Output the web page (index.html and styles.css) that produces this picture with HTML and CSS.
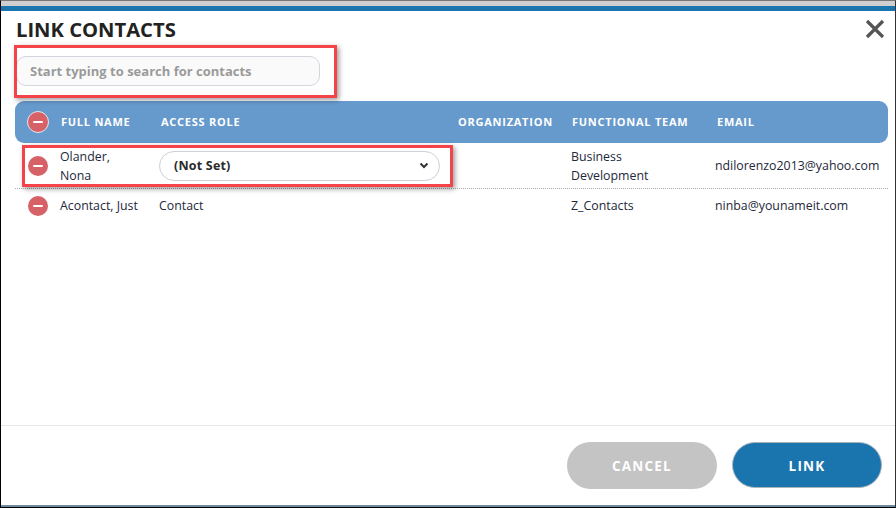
FILE: index.html
```html
<!DOCTYPE html>
<html lang="en">
<head>
<meta charset="utf-8">
<title>Link Contacts</title>
<link rel="stylesheet" href="styles.css">
</head>
<body>
<div class="frame">
  <div class="topgray"></div>
  <div class="topblue"></div>
  <div class="modal">
    <header class="head">
      <h1 class="title">LINK CONTACTS</h1>
      <button class="close" aria-label="Close">
        <svg width="20" height="20" viewBox="0 0 20 20"><path d="M2 2 L18 18 M18 2 L2 18" stroke="#555" stroke-width="3.2" fill="none"/></svg>
      </button>
    </header>
    <div class="search"><input class="search-input" placeholder="Start typing to search for contacts"></div>
    <div class="table">
      <div class="row row-head">
        <span class="cell-icon"><span class="minus minus-ring"></span></span>
        <span class="th">FULL NAME</span>
        <span class="th th-role">ACCESS ROLE</span>
        <span class="th th-org">ORGANIZATION</span>
        <span class="th">FUNCTIONAL TEAM</span>
        <span class="th th-role">EMAIL</span>
      </div>
      <div class="row row-body row-first">
        <span class="cell-icon"><span class="minus"></span></span>
        <span class="td">Olander,<br>Nona</span>
        <span class="td"><span class="select">(Not Set)
          <svg class="chev" width="10" height="7" viewBox="0 0 10 7"><path d="M1.5 1.5 L5 5 L8.5 1.5" stroke="#333" stroke-width="2" fill="none"/></svg>
        </span></span>
        <span class="td"></span>
        <span class="td">Business<br>Development</span>
        <span class="td">ndilorenzo2013@yahoo.com</span>
      </div>
      <div class="row row-body row-second">
        <span class="cell-icon"><span class="minus"></span></span>
        <span class="td">Acontact, Just</span>
        <span class="td">Contact</span>
        <span class="td"></span>
        <span class="td">Z_Contacts</span>
        <span class="td">ninba@younameit.com</span>
      </div>
    </div>
    <footer class="foot">
      <button class="btn btn-cancel">CANCEL</button>
      <button class="btn btn-link">LINK</button>
    </footer>
    <div class="mark mark-search"></div>
    <div class="mark mark-row"></div>
  </div>
  <div class="bottom"></div>
</div>
</body>
</html>
```

FILE: styles.css
```css
* { box-sizing: border-box; }
html, body { margin: 0; padding: 0; }
body { width: 896px; height: 508px; overflow: hidden; background: #fff; font-family: "Open Sans", "Liberation Sans", sans-serif; }
.frame { width: 896px; height: 508px; border: 1px solid #000; border-top-color: #777; border-right-color: #333; border-bottom: 1px solid #000; display: flex; flex-direction: column; }
.topgray { height: 5px; background: #cfcfcf; flex: none; }
.topblue { height: 5px; background: #1a75ae; flex: none; }
.modal { flex: 1; position: relative; display: flex; flex-direction: column; background: #fff; min-height: 0; }
.bottom { height: 2px; background: #6f8a9c; flex: none; }
.head { display: flex; justify-content: space-between; align-items: flex-start; padding: 5px 10px 0 15px; height: 45px; flex: none; }
.title { margin: 0; font-size: 20.2px; line-height: 27px; font-weight: 700; color: #222; }
.close { border: 0; background: none; padding: 0; margin-top: 3px; width: 20px; height: 20px; display: block; }
.close svg { display: block; }
.search { flex: none; height: 45px; padding-left: 15px; }
.search-input { display: block; width: 304px; height: 30px; border: 1px solid #d6d4de; border-radius: 10px; background: #fafafa; padding: 0 13px; font: 700 13px "Open Sans", sans-serif; color: #333; outline: 0; }
.search-input::placeholder { color: #9a9a9a; opacity: 1; }
.table { flex: 1; padding: 0 7px 0 14px; min-height: 0; }
.row { display: grid; grid-template-columns: 45px 99px 299px 113px 144px 1fr; align-items: center; }
.row-head { height: 42px; background: #6699cc; border-radius: 9px; color: #fff; padding-bottom: 2px; }
.th { font-size: 11px; font-weight: 700; letter-spacing: 0.75px; padding-left: 1px; white-space: nowrap; }
.th-role { padding-left: 2px; }
.th-org { padding-left: 0; }
.row-body .td { font-size: 12.35px; line-height: 19px; color: #23283a; }
.row-first { height: 46px; border-bottom: 1px dotted #aaa; }
.row-second { height: 34px; padding-bottom: 2px; }
.row-head .cell-icon { padding-top: 2px; }
.cell-icon { display: flex; padding-left: 13px; }
.minus { width: 20px; height: 20px; border-radius: 50%; background: #d66267; position: relative; display: block; flex: none; }
.minus::after { content: ""; position: absolute; left: 5px; right: 5px; top: 9px; height: 2px; background: #fff; border-radius: 1px; }
.minus-ring { width: 22px; height: 22px; margin-left: -1px; border: 1px solid #e6e6ee; }
.row-second .cell-icon { padding-top: 2px; }
.select { display: flex; align-items: center; justify-content: space-between; width: 281px; height: 30px; border: 1px solid #cfcfd8; border-radius: 15px; background: #fff; padding: 0 10px 0 14px; font-size: 12.5px; font-weight: 700; color: #2a2a2a; letter-spacing: 0.2px; }
.chev { display: block; }
.foot { flex: none; height: 80px; border-top: 1px solid #e6e6e6; display: flex; justify-content: flex-end; gap: 15px; padding: 16px 13px 0 0; }
.btn { width: 150px; height: 47px; border: 0; border-radius: 24px; color: #fff; font: 700 13.5px "Open Sans", sans-serif; letter-spacing: 1.2px; padding: 0; }
.btn-cancel { background: #c4c4c4; }
.btn-link { background: #1a75ae; height: 46px; border: 1px solid #a9b4bb; padding-top: 2px; }
.mark { position: absolute; border: 3px solid #f4444a; box-shadow: 2px 2px 5px rgba(0,0,0,.4); pointer-events: none; }
.mark-search { left: 13px; top: 34px; width: 323px; height: 53px; }
.mark-row { left: 21px; top: 134px; width: 431px; height: 42px; }
```
